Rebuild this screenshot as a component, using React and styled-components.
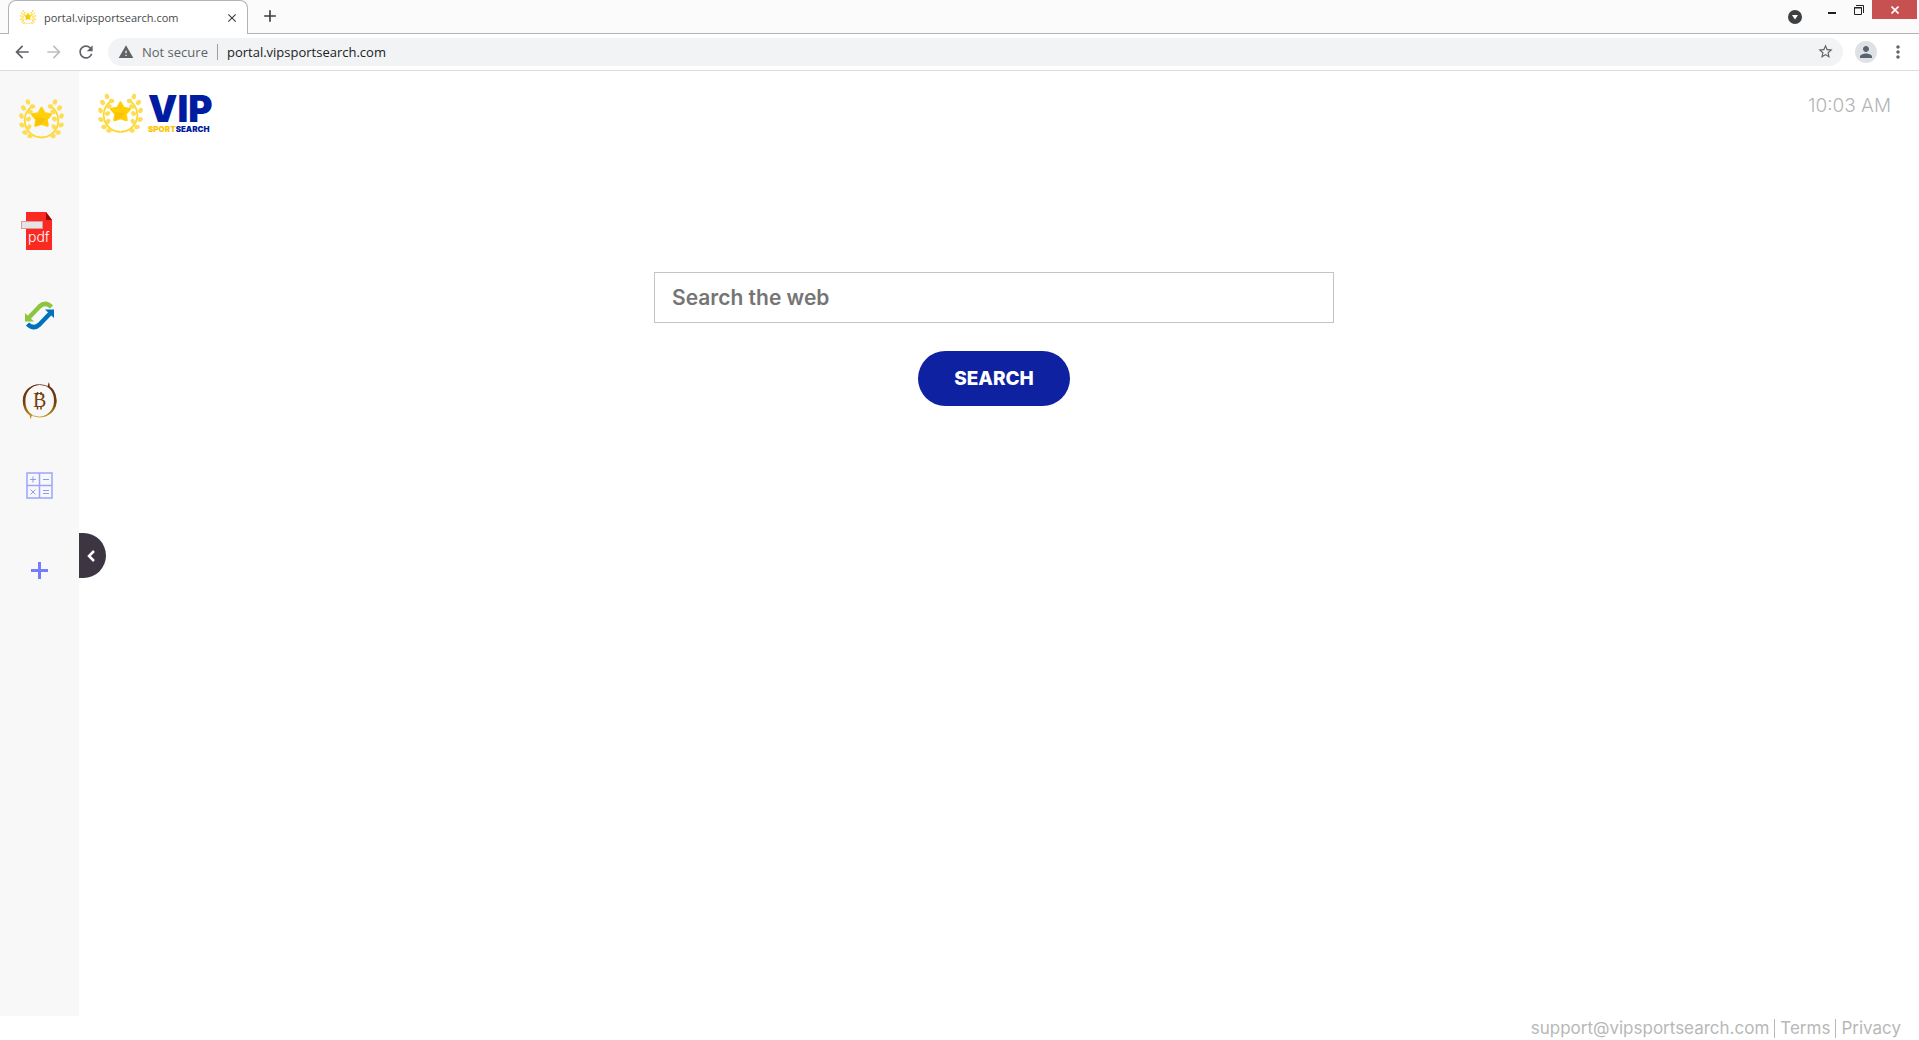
import React, { useState } from "react";
import styled, { createGlobalStyle } from "styled-components";
import {
  MdAdd,
  MdArrowBack,
  MdArrowForward,
  MdClose,
  MdMoreVert,
  MdPerson,
  MdRefresh,
  MdStarBorder,
  MdWarning,
} from "react-icons/md";

const GlobalStyle = createGlobalStyle`
  * {
    box-sizing: border-box;
  }
  body {
    margin: 0;
    background: #ffffff;
    font-family: Inter, "Open Sans", sans-serif;
  }
  button {
    padding: 0;
    border: none;
    background: none;
    font-family: inherit;
    cursor: pointer;
  }
  a {
    color: inherit;
    text-decoration: none;
  }
  svg {
    display: block;
  }
`;

const Screen = styled.div`
  display: flex;
  flex-direction: column;
  min-height: 100vh;
`;

/* browser frame */

const TabStrip = styled.div`
  display: flex;
  height: 34px;
  background: #fbfbfb;
  box-shadow: inset 0 -1px 0 #b4b4b4;
  font-family: "Open Sans", "Noto Sans", sans-serif;
`;

const Tab = styled.div`
  display: flex;
  align-items: center;
  gap: 8px;
  width: 240px;
  height: 34px;
  margin-left: 8px;
  padding: 0 7px 0 11px;
  border: 1px solid #b4b4b4;
  border-bottom: none;
  border-radius: 8px 8px 0 0;
  background: #ffffff;
  color: #45494d;
  font-size: 11px;
`;

const TabTitle = styled.span`
  flex: 1;
  white-space: nowrap;
`;

const IconButton = styled.button`
  display: flex;
  align-items: center;
  justify-content: center;
  flex: none;
  width: ${(props) => props.$size || 32}px;
  height: ${(props) => props.$size || 32}px;
  border-radius: 50%;
  background: ${(props) => props.$bg || "none"};
  color: ${(props) => props.$color || "#5f6368"};
`;

const NewTab = styled(IconButton)`
  margin-left: 6px;
`;

const ProfileButton = styled(IconButton)`
  margin-right: 5px;
`;

const WindowButtons = styled.div`
  display: flex;
  align-items: flex-start;
  margin-left: auto;
  padding-right: 2px;
`;

const TabSearch = styled.button`
  width: 14px;
  height: 14px;
  margin: 10px 18px 0 0;
`;

const WindowButton = styled.button`
  display: flex;
  align-items: center;
  justify-content: center;
  width: ${(props) => (props.$close ? 45 : 26)}px;
  height: 19px;
  background: ${(props) => (props.$close ? "#c75050" : "none")};
`;

const Toolbar = styled.div`
  display: flex;
  align-items: center;
  height: 37px;
  padding: 0 5px 1px 6px;
  border-bottom: 1px solid #dadce0;
  background: #ffffff;
  font-family: "Open Sans", "Noto Sans", sans-serif;
`;

const Omnibox = styled.div`
  display: flex;
  align-items: center;
  flex: 1;
  height: 28px;
  margin: 0 12px 0 6px;
  padding: 0 2px 0 10px;
  border-radius: 14px;
  background: #f1f3f4;
  color: #5f6368;
  font-size: 13px;
`;

const SiteState = styled.span`
  margin-left: 8px;
  padding-right: 9px;
  border-right: 1px solid #9aa0a6;
  line-height: 16px;
  white-space: nowrap;
`;

const Address = styled.input`
  flex: 1;
  min-width: 0;
  padding: 0 0 0 9px;
  border: none;
  outline: none;
  background: none;
  color: #202124;
  font-family: inherit;
  font-size: 13px;
`;

/* page */

const Page = styled.div`
  display: flex;
  flex: 1;
`;

const Sidebar = styled.nav`
  position: relative;
  flex: none;
  width: 79px;
  padding-top: 28px;
  background: #f8f8f8;
`;

const SideLogo = styled.a`
  display: flex;
  align-items: flex-start;
  justify-content: center;
  height: 89px;
  padding-left: 4px;
`;

const SideLink = styled.a`
  display: flex;
  align-items: center;
  justify-content: center;
  height: 85px;
`;

const SideToggle = styled.button`
  position: absolute;
  top: 462px;
  left: 100%;
  display: flex;
  align-items: center;
  justify-content: center;
  width: 27px;
  height: 45px;
  padding-right: 3px;
  border-radius: 0 23px 23px 0;
  background: #3e3543;
`;

const Main = styled.main`
  flex: 1;
  min-width: 0;
`;

const Header = styled.header`
  display: flex;
  justify-content: space-between;
  align-items: flex-start;
  height: 201px;
  padding: 22px 28px 0 19px;
`;

const Brand = styled.a`
  display: flex;
  gap: 5px;
`;

const BrandText = styled.span`
  display: flex;
  flex-direction: column;
  color: #001ca0;
  font-weight: 900;
`;

const BrandName = styled.span`
  font-size: 37px;
  line-height: 31px;
`;

const BrandSub = styled.span`
  font-size: 8px;
  line-height: 10px;

  b {
    color: #fdc500;
    font-weight: 900;
  }
`;

const Clock = styled.time`
  color: #b5b5b5;
  font-size: 19px;
  font-weight: 300;
  line-height: 26px;
`;

const SearchForm = styled.form`
  display: flex;
  flex-direction: column;
  align-items: center;
  gap: 28px;
  padding-right: 10px;
`;

const SearchInput = styled.input`
  width: 680px;
  max-width: 100%;
  height: 51px;
  padding: 0 17px 1px;
  border: 1px solid #c4c4c4;
  outline: none;
  background: #ffffff;
  color: #333333;
  font-family: inherit;
  font-size: 21px;
  font-weight: 600;

  &::placeholder {
    color: #757575;
    opacity: 1;
  }
`;

const SearchButton = styled.button`
  width: 152px;
  height: 55px;
  border-radius: 28px;
  background: #0d21a1;
  color: #ffffff;
  font-size: 19px;
  font-weight: 800;
`;

const Footer = styled.footer`
  display: flex;
  align-items: center;
  justify-content: flex-end;
  height: 24px;
  padding-right: 18px;
  color: #b8b8b8;
  font-size: 17px;
  line-height: 19px;

  a + a {
    margin-left: 5px;
    padding-left: 5px;
    border-left: 1px solid #b8b8b8;
  }
`;

// left half of the wreath: x, y, angle of each leaf
const leaves = [
  [9, 3, 75],
  [13.5, 7.5, -10],
  [4.5, 9, 50],
  [11, 13, -20],
  [2.5, 17, 70],
  [9.5, 20, -40],
  [3, 26, 30],
  [10, 28, -60],
  [6, 33.5, 10],
  [11, 37, -10],
];

const Wreath = ({ width }) => {
  const half = (
    <>
      <path
        d="M13 7.500A17 17 0 0 0 22.500 38.500"
        fill="none"
        stroke="#fdd835"
        strokeWidth="1.800"
      />
      {leaves.map(([x, y, angle]) => (
        <ellipse
          key={`${x}-${y}`}
          cx={x}
          cy={y}
          rx="2.800"
          ry="2.200"
          fill="#fddd55"
          transform={`rotate(${angle} ${x} ${y})`}
        />
      ))}
    </>
  );

  return (
    <svg width={width} viewBox="0 0 45 40" aria-hidden="true">
      {half}
      <g transform="matrix(-1 0 0 1 45 0)">{half}</g>
      <path
        d="M22.500 9L25.500 14.500L31.800 15.500L27.500 20.500L28.500 26.500L22.500 24.500L16.500 26.500L17.500 20.500L13.200 15.500L19.500 14.500Z"
        fill="#ffd006"
        stroke="#ffd006"
        strokeWidth="2.500"
        strokeLinejoin="round"
      />
      <path d="M13 15.500L17.500 20.500L16.500 27L22.500 24.500L28 19.500L17 18.500Z" fill="#f9c208" />
    </svg>
  );
};

const PdfIcon = () => (
  <svg width="40" height="38" viewBox="0 0 40 38">
    <path d="M6 0H26L32 8V38H6Z" fill="#fa2a23" />
    <path d="M26 0L32 8H26Z" fill="#9d0703" />
    <rect x="1.500" y="9.500" width="21" height="7" fill="#e6e3e4" stroke="#d99a9d" />
    <text x="8" y="30" fill="#ffffff" fontFamily="Inter, sans-serif" fontSize="14" fontWeight="300">
      pdf
    </text>
  </svg>
);

const ConvertIcon = () => (
  <svg width="29" height="29" viewBox="0 0 29 29">
    <path d="M0 12V20.500H9Z" fill="#8cc63f" />
    <path d="M4 16.500L14.500 5.500Q20.500 0 26.500 6" fill="none" stroke="#8cc63f" strokeWidth="4.500" />
    <path d="M29 17V8.500H20Z" fill="#0071bc" />
    <path d="M25 12.500L14.500 23.500Q8.500 29 2.500 23" fill="none" stroke="#0071bc" strokeWidth="4.500" />
  </svg>
);

const BitcoinIcon = () => (
  <svg width="35" height="38" viewBox="0 0 35 38">
    <defs>
      <linearGradient id="coin" gradientUnits="userSpaceOnUse" x1="0" y1="0" x2="0" y2="38">
        <stop offset="0" stopColor="#662e0c" />
        <stop offset="0.550" stopColor="#74400c" />
        <stop offset="1" stopColor="#d6ac1b" />
      </linearGradient>
    </defs>
    <circle cx="17.700" cy="18.800" r="16.300" fill="none" stroke="url(#coin)" strokeWidth="0.800" />
    <path
      fill="url(#coin)"
      d="M17 2.300C7 3 0.500 10 0.800 19C1 26 4 31 7.500 33L8.500 37.500L10 33C5 29 3 24 3.500 17C4 10 9 4.500 17 2.300Z"
    />
    <path
      fill="url(#coin)"
      d="M18.400 35.300C28.400 34.600 34.900 27.600 34.600 18.600C34.400 11.600 31.400 6.600 27.900 4.600L26.900 0L25.400 4.600C30.400 8.600 32.400 13.600 31.900 20.600C31.400 27.600 26.400 33.100 18.400 35.300Z"
    />
    <text x="11" y="25" fill="#74400c" fontFamily="Liberation Serif, serif" fontSize="20" fontWeight="400">
      B
    </text>
    <path d="M15.500 10V13M15.500 24V27.500M19 10V13M19 24V27.500" stroke="#74400c" strokeWidth="1.500" />
  </svg>
);

const CalculatorIcon = () => (
  <svg width="27" height="27" viewBox="0 0 27 27" fill="none" stroke="#8f98fb">
    <path d="M1 1H26V26H1ZM13.500 1V26M1 13.500H26" stroke="#9ba4ff" strokeWidth="1.500" />
    <path d="M4 7.500H10M7 4.500V10.500M17 7.500H23M17 18.500H23M17 21.500H23M4.500 17.500L9.500 22.500M9.500 17.500L4.500 22.500" />
  </svg>
);

const PlusIcon = () => (
  <svg width="17" height="17" viewBox="0 0 17 17">
    <path d="M8.500 0V17M0 8.500H17" stroke="#747dff" strokeWidth="3" />
  </svg>
);

const links = [
  { name: "PDF", icon: <PdfIcon /> },
  { name: "Converter", icon: <ConvertIcon /> },
  { name: "Bitcoin", icon: <BitcoinIcon /> },
  { name: "Calculator", icon: <CalculatorIcon /> },
  { name: "Add", icon: <PlusIcon /> },
];

const BrowserFrame = () => (
  <>
    <TabStrip>
      <Tab>
        <Wreath width={16} />
        <TabTitle>portal.vipsportsearch.com</TabTitle>
        <IconButton $size={16} $color="#3c4043" aria-label="Close tab">
          <MdClose size={14} />
        </IconButton>
      </Tab>
      <NewTab $color="#3c4043" aria-label="New tab">
        <MdAdd size={20} />
      </NewTab>
      <WindowButtons>
        <TabSearch aria-label="Search tabs">
          <svg width="14" height="14" viewBox="0 0 14 14">
            <circle cx="7" cy="7" r="7" fill="#3c4043" />
            <path d="M4 5H10L7 9.500Z" fill="#ffffff" />
          </svg>
        </TabSearch>
        <WindowButton aria-label="Minimize">
          <svg width="10" height="10" viewBox="0 0 10 10">
            <path d="M0 8H8" stroke="#202124" strokeWidth="2" />
          </svg>
        </WindowButton>
        <WindowButton aria-label="Restore">
          <svg width="10" height="10" viewBox="0 0 10 10" fill="none" stroke="#202124">
            <path d="M2 0.500H9.500V8" />
            <path d="M0.500 2.500H7.500V9.500H0.500ZM0 3H8" />
          </svg>
        </WindowButton>
        <WindowButton $close aria-label="Close">
          <svg width="8" height="8" viewBox="0 0 8 8">
            <path d="M0.500 0.500L7.500 7.500M7.500 0.500L0.500 7.500" stroke="#ffffff" strokeWidth="1.600" />
          </svg>
        </WindowButton>
      </WindowButtons>
    </TabStrip>
    <Toolbar>
      <IconButton aria-label="Back">
        <MdArrowBack size={20} />
      </IconButton>
      <IconButton $color="#bdbfc2" aria-label="Forward">
        <MdArrowForward size={20} />
      </IconButton>
      <IconButton aria-label="Reload">
        <MdRefresh size={20} />
      </IconButton>
      <Omnibox>
        <MdWarning size={16} />
        <SiteState>Not secure</SiteState>
        <Address aria-label="Address" defaultValue="portal.vipsportsearch.com" />
        <IconButton aria-label="Bookmark">
          <MdStarBorder size={17} />
        </IconButton>
      </Omnibox>
      <ProfileButton $size={22} $bg="#dee1e6" $color="#5a6270" aria-label="Profile">
        <MdPerson size={18} />
      </ProfileButton>
      <IconButton aria-label="Menu">
        <MdMoreVert size={20} />
      </IconButton>
    </Toolbar>
  </>
);

const App = () => {
  const [query, setQuery] = useState("");

  const handleSubmit = (event) => {
    event.preventDefault();
  };

  return (
    <Screen>
      <GlobalStyle />
      <BrowserFrame />
      <Page>
        <Sidebar>
          <SideLogo href="#" aria-label="Home">
            <Wreath width={45} />
          </SideLogo>
          {links.map((link) => (
            <SideLink key={link.name} href="#" aria-label={link.name}>
              {link.icon}
            </SideLink>
          ))}
          <SideToggle aria-label="Collapse">
            <svg width="8" height="12" viewBox="0 0 8 12">
              <path d="M7 1L2 6L7 11" fill="none" stroke="#ffffff" strokeWidth="2.500" />
            </svg>
          </SideToggle>
        </Sidebar>
        <Main>
          <Header>
            <Brand href="#">
              <Wreath width={45} />
              <BrandText>
                <BrandName>VIP</BrandName>
                <BrandSub>
                  <b>SPORT</b>SEARCH
                </BrandSub>
              </BrandText>
            </Brand>
            <Clock>10:03 AM</Clock>
          </Header>
          <SearchForm onSubmit={handleSubmit}>
            <SearchInput
              type="text"
              name="query"
              aria-label="Search the web"
              placeholder="Search the web"
              value={query}
              onChange={(event) => setQuery(event.target.value)}
            />
            <SearchButton type="submit">SEARCH</SearchButton>
          </SearchForm>
        </Main>
      </Page>
      <Footer>
        <a href="mailto:support@vipsportsearch.com">support@vipsportsearch.com</a>
        <a href="#">Terms</a>
        <a href="#">Privacy</a>
      </Footer>
    </Screen>
  );
};

export default App;
